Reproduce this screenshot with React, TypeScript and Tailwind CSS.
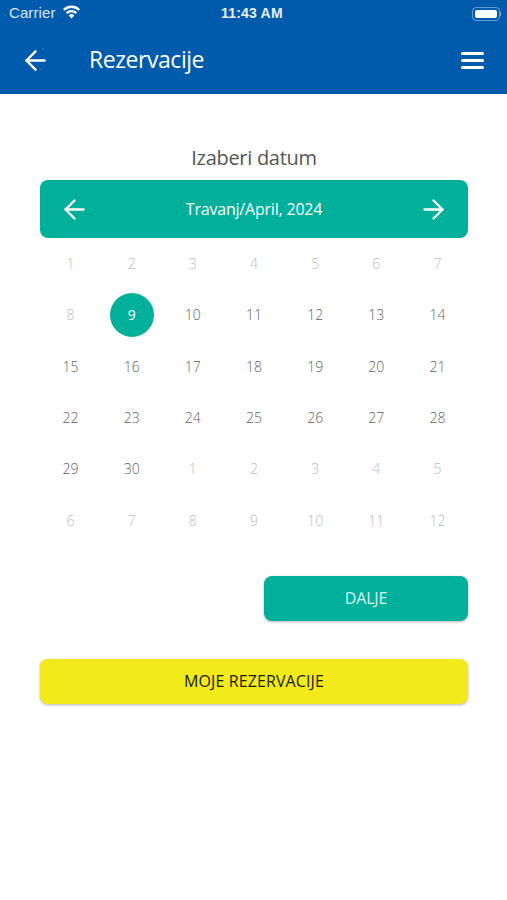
import React from 'react'
import { ArrowLeft, ArrowRight } from 'lucide-react'

const days = [
  [1, 2, 3, 4, 5, 6, 7].map((d) => ({ d, off: true })),
  [8, 9, 10, 11, 12, 13, 14].map((d) => ({ d, off: d === 8 })),
  [15, 16, 17, 18, 19, 20, 21].map((d) => ({ d, off: false })),
  [22, 23, 24, 25, 26, 27, 28].map((d) => ({ d, off: false })),
  [29, 30].map((d) => ({ d, off: false })).concat([1, 2, 3, 4, 5].map((d) => ({ d, off: true }))),
  [6, 7, 8, 9, 10, 11, 12].map((d) => ({ d, off: true })),
].flat()

const StatusBar = () => (
  <div className="relative flex h-[27px] items-center justify-between pl-[9px] pr-[6px] font-['Liberation_Sans',sans-serif] text-white">
    <div className="flex items-center gap-[6px]">
      <span className="text-[15px] tracking-[0.1px] opacity-85">Carrier</span>
      <svg width="19" height="14" viewBox="0 0 19 14" fill="white" className="mb-[3px]">
        <path d="M9.5 13.5 6.8 10.4a3.8 3.8 0 0 1 5.4 0L9.5 13.5Z" />
        <path d="M5.5 9 3.9 7.2a8 8 0 0 1 11.2 0L13.5 9a5.7 5.7 0 0 0-8 0Z" />
        <path d="M2.6 5.8 1 4a12.2 12.2 0 0 1 17 0l-1.6 1.8a10 10 0 0 0-13.8 0Z" />
      </svg>
    </div>
    <span className="absolute left-[221px] top-[5px] text-[14px] font-bold leading-[17px] tracking-[0.2px] opacity-90">11:43 AM</span>
    <div className="flex items-center">
      <div className="flex h-[14px] w-[28px] items-center rounded-[4px] border border-white/40 p-[2px]">
        <div className="h-full w-full rounded-[2px] bg-white" />
      </div>
      <div className="h-[4px] w-[1px] bg-white/50" />
    </div>
  </div>
)

export default function App() {
  return (
    <div className="min-h-[900px] bg-white font-['Open_Sans',sans-serif]">
      <header className="h-[94px] bg-[#005bac]">
        <StatusBar />
        <div className="flex h-[67px] items-center pl-[20px] pr-[23px] text-white">
          <ArrowLeft size={31} strokeWidth={1.9} className="mb-[1px] shrink-0" />
          <h1 className="mb-[2px] ml-[38px] flex-1 text-[23px] tracking-[-0.45px]">Rezervacije</h1>
          <div className="flex w-[23px] shrink-0 flex-col gap-[4.5px]">
            <div className="h-[2.5px] rounded-full bg-white" />
            <div className="h-[2.5px] rounded-full bg-white" />
            <div className="h-[2.5px] rounded-full bg-white" />
          </div>
        </div>
      </header>

      <main className="pl-[40px] pr-[39px] pt-[50px]">
        <h2 className="h-[27px] text-center text-[20px] leading-[27px] tracking-[-0.3px] text-[#555555]">Izaberi datum</h2>
        <div className="mt-[9px] flex h-[58px] items-center justify-between rounded-[8px] bg-[#00b09b] pl-[19px] pr-[19px] text-white">
          <ArrowLeft size={31} strokeWidth={1.8} />
          <span className="text-[16px] tracking-[-0.2px]">Travanj/April, 2024</span>
          <ArrowRight size={31} strokeWidth={1.8} />
        </div>

        <div className="grid grid-cols-7 grid-rows-[repeat(6,51.3px)] text-[14px] font-light text-[#5f5f5f]">
          {days.map(({ d, off }, i) => (
            <div key={i} className="flex items-center justify-center">
              {d === 9 && !off && i === 8 ? (
                <div className="flex h-[44px] w-[44px] items-center justify-center rounded-full bg-[#00b09b] font-normal text-white">{d}</div>
              ) : (
                <span className={off ? 'text-[#bbbbbb]' : ''}>{d}</span>
              )}
            </div>
          ))}
        </div>

        <div className="mt-[30px] flex justify-end">
          <button className="h-[45px] w-[204px] rounded-[8px] bg-[#00b09b] text-[16px] tracking-[-0.2px] text-[#d5f5ee] shadow-[0_1px_3px_rgba(0,0,0,0.3)]">DALJE</button>
        </div>
        <button className="mt-[38px] h-[45px] w-full rounded-[8px] bg-[#f2ea1a] text-[16px] font-medium tracking-[0.1px] text-[#1c1c0a] shadow-[0_1px_3px_rgba(0,0,0,0.3)]">MOJE REZERVACIJE</button>
      </main>
    </div>
  )
}
